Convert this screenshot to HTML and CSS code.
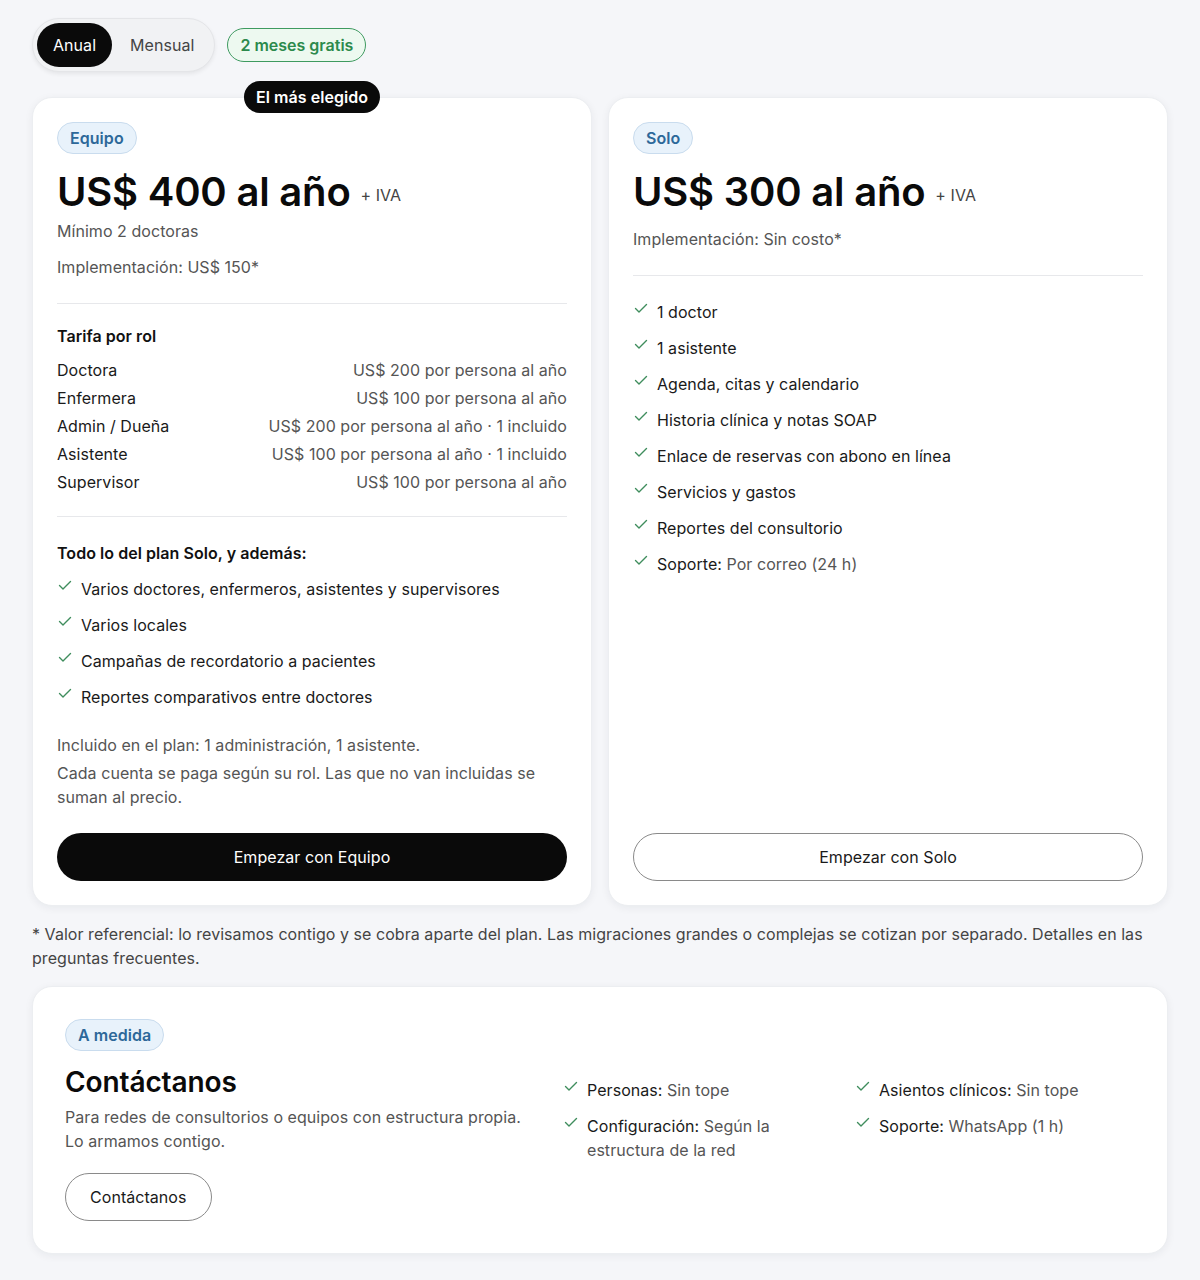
FILE: index.html
```html
<!DOCTYPE html>
<html lang="es">
<head>
<meta charset="utf-8">
<title>Planes</title>
<link rel="stylesheet" href="styles.css">
</head>
<body>
<main class="page">
  <div class="billing">
    <div class="toggle">
      <button class="toggle-btn active">Anual</button>
      <button class="toggle-btn">Mensual</button>
    </div>
    <span class="save-pill">2 meses gratis</span>
  </div>

  <div class="plans">
    <section class="card plan">
      <span class="popular">El más elegido</span>
      <span class="tag">Equipo</span>
      <div class="price-row"><span class="price">US$ 400 al año</span><span class="tax">+ IVA</span></div>
      <p class="sub min">Mínimo 2 doctoras</p>
      <p class="sub impl">Implementación: US$ 150*</p>
      <hr class="divider">
      <h3 class="block-title">Tarifa por rol</h3>
      <div class="rates">
        <div class="rate"><span>Doctora</span><span class="rate-val">US$ 200 por persona al año</span></div>
        <div class="rate"><span>Enfermera</span><span class="rate-val">US$ 100 por persona al año</span></div>
        <div class="rate"><span>Admin / Dueña</span><span class="rate-val">US$ 200 por persona al año · 1 incluido</span></div>
        <div class="rate"><span>Asistente</span><span class="rate-val">US$ 100 por persona al año · 1 incluido</span></div>
        <div class="rate"><span>Supervisor</span><span class="rate-val">US$ 100 por persona al año</span></div>
      </div>
      <hr class="divider d2">
      <h3 class="block-title t2">Todo lo del plan Solo, y además:</h3>
      <ul class="checks">
        <li><svg class="ck" viewBox="0 0 16 16"><path d="M2.5 8.5 L6 12 L13.5 4.5"/></svg><span>Varios doctores, enfermeros, asistentes y supervisores</span></li>
        <li><svg class="ck" viewBox="0 0 16 16"><path d="M2.5 8.5 L6 12 L13.5 4.5"/></svg><span>Varios locales</span></li>
        <li><svg class="ck" viewBox="0 0 16 16"><path d="M2.5 8.5 L6 12 L13.5 4.5"/></svg><span>Campañas de recordatorio a pacientes</span></li>
        <li><svg class="ck" viewBox="0 0 16 16"><path d="M2.5 8.5 L6 12 L13.5 4.5"/></svg><span>Reportes comparativos entre doctores</span></li>
      </ul>
      <p class="note">Incluido en el plan: 1 administración, 1 asistente.</p>
      <p class="note n2">Cada cuenta se paga según su rol. Las que no van incluidas se suman al precio.</p>
      <button class="cta dark">Empezar con Equipo</button>
    </section>

    <section class="card plan">
      <span class="tag">Solo</span>
      <div class="price-row"><span class="price">US$ 300 al año</span><span class="tax">+ IVA</span></div>
      <p class="sub impl-solo">Implementación: Sin costo*</p>
      <hr class="divider">
      <ul class="checks solo">
        <li><svg class="ck" viewBox="0 0 16 16"><path d="M2.5 8.5 L6 12 L13.5 4.5"/></svg><span>1 doctor</span></li>
        <li><svg class="ck" viewBox="0 0 16 16"><path d="M2.5 8.5 L6 12 L13.5 4.5"/></svg><span>1 asistente</span></li>
        <li><svg class="ck" viewBox="0 0 16 16"><path d="M2.5 8.5 L6 12 L13.5 4.5"/></svg><span>Agenda, citas y calendario</span></li>
        <li><svg class="ck" viewBox="0 0 16 16"><path d="M2.5 8.5 L6 12 L13.5 4.5"/></svg><span>Historia clínica y notas SOAP</span></li>
        <li><svg class="ck" viewBox="0 0 16 16"><path d="M2.5 8.5 L6 12 L13.5 4.5"/></svg><span>Enlace de reservas con abono en línea</span></li>
        <li><svg class="ck" viewBox="0 0 16 16"><path d="M2.5 8.5 L6 12 L13.5 4.5"/></svg><span>Servicios y gastos</span></li>
        <li><svg class="ck" viewBox="0 0 16 16"><path d="M2.5 8.5 L6 12 L13.5 4.5"/></svg><span>Reportes del consultorio</span></li>
        <li><svg class="ck" viewBox="0 0 16 16"><path d="M2.5 8.5 L6 12 L13.5 4.5"/></svg><span>Soporte: <span class="muted">Por correo (24 h)</span></span></li>
      </ul>
      <button class="cta outline">Empezar con Solo</button>
    </section>
  </div>

  <p class="footnote">* Valor referencial: lo revisamos contigo y se cobra aparte del plan. Las migraciones grandes o complejas se cotizan por separado. Detalles en las preguntas frecuentes.</p>

  <section class="card custom">
    <div class="custom-left">
      <span class="tag">A medida</span>
      <h2 class="custom-title">Contáctanos</h2>
      <p class="custom-text">Para redes de consultorios o equipos con estructura propia. Lo armamos contigo.</p>
      <button class="cta outline small">Contáctanos</button>
    </div>
    <ul class="checks grid2">
      <li><svg class="ck" viewBox="0 0 16 16"><path d="M2.5 8.5 L6 12 L13.5 4.5"/></svg><span><span class="strong">Personas:</span> <span class="muted">Sin tope</span></span></li>
      <li><svg class="ck" viewBox="0 0 16 16"><path d="M2.5 8.5 L6 12 L13.5 4.5"/></svg><span><span class="strong">Asientos clínicos:</span> <span class="muted">Sin tope</span></span></li>
      <li><svg class="ck" viewBox="0 0 16 16"><path d="M2.5 8.5 L6 12 L13.5 4.5"/></svg><span class="muted"><span class="strong">Configuración:</span> Según la estructura de la red</span></li>
      <li><svg class="ck" viewBox="0 0 16 16"><path d="M2.5 8.5 L6 12 L13.5 4.5"/></svg><span><span class="strong">Soporte:</span> <span class="muted">WhatsApp (1 h)</span></span></li>
    </ul>
  </section>
</main>
</body>
</html>
```

FILE: styles.css
```css
* { box-sizing: border-box; }

html, body {
  margin: 0;
  padding: 0;
  background: #f5f6f9;
}

body {
  font-family: Inter, "Noto Sans", "Liberation Sans", sans-serif;
  color: #111;
  font-size: 16px;
  line-height: 24px;
  letter-spacing: 0.05px;
}

.page {
  padding: 18px 32px 24px;
}

p, h2, h3, ul { margin: 0; padding: 0; }

button {
  font-family: inherit;
  letter-spacing: inherit;
  cursor: pointer;
}

/* billing toggle */
.billing {
  display: flex;
  align-items: center;
  gap: 12px;
  margin-bottom: 25px;
}

.toggle {
  display: flex;
  gap: 2px;
  padding: 4px;
  background: #f1f2f4;
  border: 1px solid #e4e5e8;
  border-radius: 999px;
  box-shadow: 0 2px 4px rgba(0,0,0,0.07);
}

.toggle-btn {
  height: 44px;
  padding: 0 16px;
  border: 0;
  border-radius: 999px;
  background: transparent;
  color: #444;
  font-size: 16px;
}

.toggle-btn.active {
  background: #0a0a0a;
  color: #fff;
}

.save-pill {
  height: 34px;
  display: inline-flex;
  align-items: center;
  padding: 0 12px;
  border: 1px solid #3e9a60;
  border-radius: 999px;
  background: #edf9f0;
  color: #2c8a4c;
  font-weight: 600;
  font-size: 16px;
  letter-spacing: 0;
}

/* cards */
.plans {
  display: grid;
  grid-template-columns: 1fr 1fr;
  gap: 16px;
}

.card {
  position: relative;
  background: #fff;
  border: 1px solid #eceef1;
  border-radius: 20px;
  box-shadow: 0 2px 8px rgba(20, 30, 50, 0.06);
}

.plan {
  padding: 24px;
  display: flex;
  flex-direction: column;
  align-items: flex-start;
}

.popular {
  position: absolute;
  top: -17px;
  left: 50%;
  transform: translateX(-50%);
  height: 32px;
  padding: 0 12px;
  display: inline-flex;
  align-items: center;
  background: #0a0a0a;
  color: #fff;
  border-radius: 999px;
  font-weight: 600;
  font-size: 16px;
  white-space: nowrap;
}

.tag {
  height: 32px;
  display: inline-flex;
  align-items: center;
  padding: 0 12px;
  background: #e8f2fb;
  border: 1px solid #c9dcee;
  border-radius: 999px;
  color: #2d6899;
  font-weight: 600;
  font-size: 16px;
}

.price-row {
  display: flex;
  align-items: flex-end;
  gap: 10px;
  margin-top: 14px;
}

.price {
  font-size: 40px;
  line-height: 48px;
  font-weight: 600;
  letter-spacing: -0.2px;
  color: #0a0a0a;
}

.tax {
  font-size: 16px;
  color: #444;
  line-height: 24px;
  padding-bottom: 9px;
}

.sub {
  color: #555;
  font-size: 16px;
}

.min { margin-top: 3px; }
.impl { margin-top: 12px; }
.impl-solo { margin-top: 11px; }

.divider {
  align-self: stretch;
  border: 0;
  border-top: 1px solid #e7e8eb;
  margin: 24px 0 20px;
}

.divider.d2 { margin: 20px 0 24px; }

.block-title {
  font-size: 16px;
  font-weight: 600;
  color: #111;
}

.rates {
  align-self: stretch;
  margin-top: 8px;
}

.rate {
  display: flex;
  justify-content: space-between;
  line-height: 28px;
  color: #1a1a1a;
}

.rate-val {
  color: #555;
}

.checks {
  list-style: none;
  display: flex;
  flex-direction: column;
  gap: 12px;
  margin-top: 12px;
}

.checks.solo {
  margin-top: 4px;
}

.checks li {
  display: flex;
  gap: 8px;
  color: #1a1a1a;
}

.ck {
  flex: none;
  width: 16px;
  height: 16px;
  fill: none;
  stroke: #3f8d5d;
  stroke-width: 1.4;
  stroke-linecap: round;
  stroke-linejoin: round;
}

.muted { color: #555; }
.strong { color: #1a1a1a; }

.note {
  color: #555;
  margin-top: 24px;
}

.note.n2 { margin-top: 4px; }

.cta {
  align-self: stretch;
  margin-top: auto;
  height: 48px;
  border-radius: 999px;
  font-size: 16px;
}

.plan .cta { margin-top: 24px; }
.plan .cta.outline { margin-top: auto; }

.cta.dark {
  background: #0a0a0a;
  color: #fff;
  border: 0;
}

.cta.outline {
  background: #fff;
  color: #1a1a1a;
  border: 1px solid #8a8a8a;
}

.footnote {
  color: #444;
  margin: 16px 0 16px;
}

/* custom plan */
.custom {
  padding: 32px;
  display: grid;
  grid-template-columns: 466px 1fr;
  gap: 32px;
  align-items: center;
}

.custom-left {
  display: flex;
  flex-direction: column;
  align-items: flex-start;
}

.custom-title {
  margin-top: 13px;
  font-size: 28px;
  line-height: 36px;
  font-weight: 600;
  letter-spacing: -0.1px;
  color: #0a0a0a;
}

.custom-text {
  margin-top: 5px;
  color: #555;
  max-width: 466px;
}

.cta.small {
  align-self: flex-start;
  margin-top: 20px;
  padding: 0 24px;
}

.checks.grid2 {
  display: grid;
  grid-template-columns: 1fr 1fr;
  column-gap: 12px;
  row-gap: 12px;
  margin-top: 0;
}
```
